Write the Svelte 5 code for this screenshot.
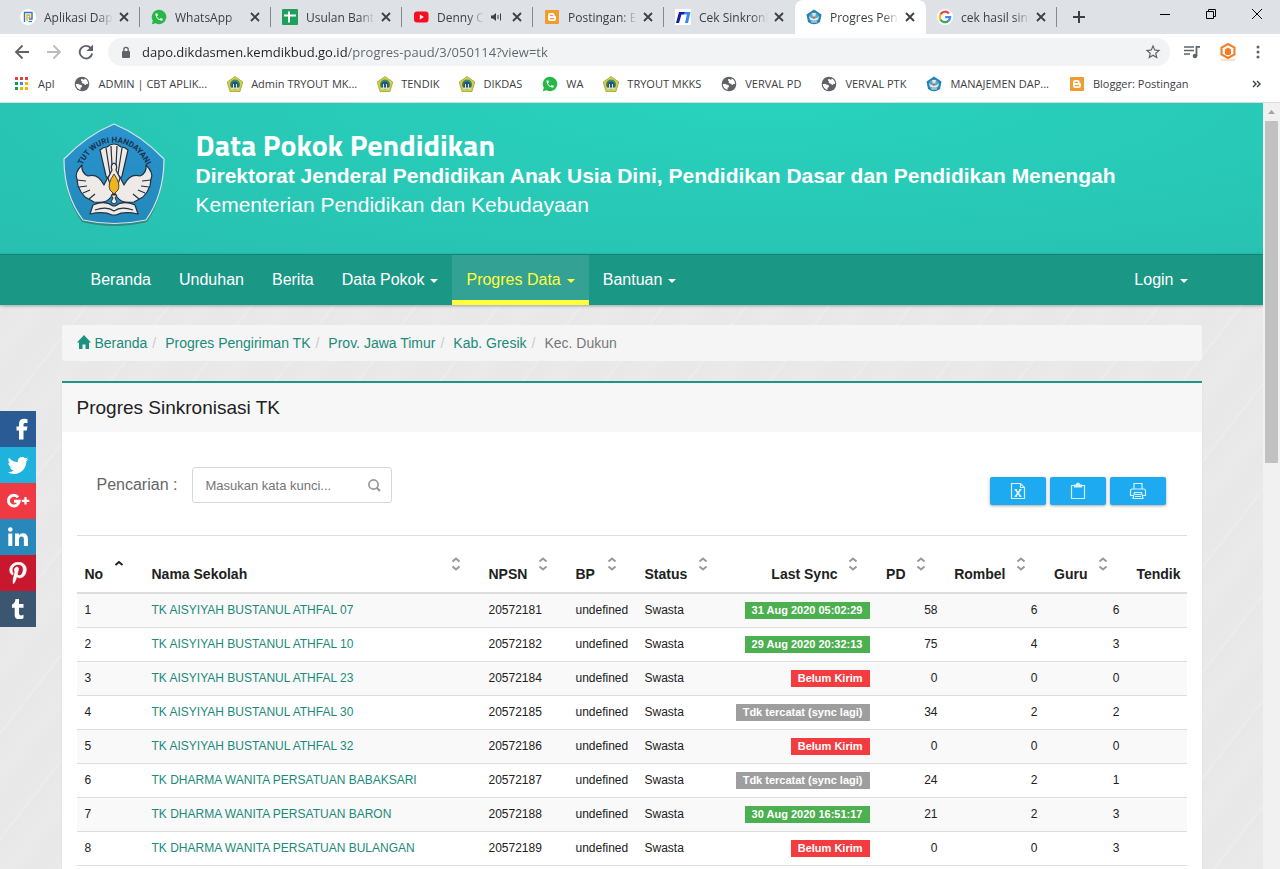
<script>
	const tabs = [
		{ icon: 'dapodik', title: 'Aplikasi Dapodik' },
		{ icon: 'whatsapp', title: 'WhatsApp' },
		{ icon: 'sheets', title: 'Usulan Bantuan' },
		{ icon: 'youtube', title: 'Denny Caknan', sound: true },
		{ icon: 'blogger', title: 'Postingan: Edit' },
		{ icon: 'sync', title: 'Cek Sinkronisasi' },
		{ icon: 'tutwuri', title: 'Progres Pengiriman', active: true },
		{ icon: 'google', title: 'cek hasil sinkron' }
	];

	const bookmarks = [
		{ icon: 'apps', title: 'Apl' },
		{ icon: 'globe', title: 'ADMIN | CBT APLIK...' },
		{ icon: 'jatim', title: 'Admin TRYOUT MK...' },
		{ icon: 'jatim', title: 'TENDIK' },
		{ icon: 'jatim', title: 'DIKDAS' },
		{ icon: 'whatsapp', title: 'WA' },
		{ icon: 'jatim', title: 'TRYOUT MKKS' },
		{ icon: 'globe', title: 'VERVAL PD' },
		{ icon: 'globe', title: 'VERVAL PTK' },
		{ icon: 'tutwuri', title: 'MANAJEMEN DAP...' },
		{ icon: 'blogger', title: 'Blogger: Postingan' }
	];

	const menu = [
		{ label: 'Beranda' },
		{ label: 'Unduhan' },
		{ label: 'Berita' },
		{ label: 'Data Pokok', dropdown: true },
		{ label: 'Progres Data', dropdown: true, active: true },
		{ label: 'Bantuan', dropdown: true }
	];

	const crumbs = ['Progres Pengiriman TK', 'Prov. Jawa Timur', 'Kab. Gresik'];

	const social = ['facebook', 'twitter', 'gplus', 'linkedin', 'pinterest', 'tumblr'];

	const columns = [
		{ label: 'No', cls: 'no', sorted: true },
		{ label: 'Nama Sekolah', cls: 'nama' },
		{ label: 'NPSN', cls: 'npsn' },
		{ label: 'BP', cls: 'bp' },
		{ label: 'Status', cls: 'status' },
		{ label: 'Last Sync', cls: 'sync', num: true },
		{ label: 'PD', cls: 'pd', num: true },
		{ label: 'Rombel', cls: 'rombel', num: true },
		{ label: 'Guru', cls: 'guru', num: true },
		{ label: 'Tendik', cls: 'tendik', num: true }
	];

	const belum = { text: 'Belum Kirim', type: 'danger' };
	const lagi = { text: 'Tdk tercatat (sync lagi)', type: 'default' };
	const ok = (text) => ({ text, type: 'success' });

	const schools = [
		{ nama: 'TK AISYIYAH BUSTANUL ATHFAL 07', npsn: '20572181', sync: ok('31 Aug 2020 05:02:29'), pd: 58, rombel: 6, guru: 6 },
		{ nama: 'TK AISYIYAH BUSTANUL ATHFAL 10', npsn: '20572182', sync: ok('29 Aug 2020 20:32:13'), pd: 75, rombel: 4, guru: 3 },
		{ nama: 'TK AISYIYAH BUSTANUL ATHFAL 23', npsn: '20572184', sync: belum, pd: 0, rombel: 0, guru: 0 },
		{ nama: 'TK AISYIYAH BUSTANUL ATHFAL 30', npsn: '20572185', sync: lagi, pd: 34, rombel: 2, guru: 2 },
		{ nama: 'TK AISYIYAH BUSTANUL ATHFAL 32', npsn: '20572186', sync: belum, pd: 0, rombel: 0, guru: 0 },
		{ nama: 'TK DHARMA WANITA PERSATUAN BABAKSARI', npsn: '20572187', sync: lagi, pd: 24, rombel: 2, guru: 1 },
		{ nama: 'TK DHARMA WANITA PERSATUAN BARON', npsn: '20572188', sync: ok('30 Aug 2020 16:51:17'), pd: 21, rombel: 2, guru: 3 },
		{ nama: 'TK DHARMA WANITA PERSATUAN BULANGAN', npsn: '20572189', sync: belum, pd: 0, rombel: 0, guru: 3 }
	];

	let url = $state('dapo.dikdasmen.kemdikbud.go.id/progres-paud/3/050114?view=tk');
	let keyword = $state('');

	let rows = $derived(schools.filter((s) => s.nama.toLowerCase().includes(keyword.toLowerCase())));
</script>

{#snippet favicon(name)}
	<svg class="favicon" viewBox="0 0 16 16" aria-hidden="true">
		{#if name === 'dapodik'}
			<circle cx="8" cy="8" r="8" fill="#fff" />
			<path d="M4.500 13V3.500h7.500v6.500H9" fill="none" stroke="#2b7bb9" stroke-width="1.400" />
			<path d="M7 12V6h2.800v2.800H8" fill="none" stroke="#e9a23b" stroke-width="1.300" />
			<path d="M8.500 12.500H12" stroke="#2b7bb9" stroke-width="1.200" />
		{:else if name === 'whatsapp'}
			<path d="M8 .8a7.200 7.200 0 0 0-6.200 10.900L.8 15.300l3.800-1A7.200 7.200 0 1 0 8 .8z" fill="#25b846" />
			<path
				transform="translate(3.200 3.200) scale(.4)"
				d="M6.620 10.790c1.440 2.830 3.760 5.140 6.590 6.590l2.200-2.200c.27-.27.67-.36 1.020-.24 1.120.37 2.330.57 3.570.57.55 0 1 .45 1 1V20c0 .55-.45 1-1 1-9.390 0-17-7.610-17-17 0-.55.45-1 1-1h3.500c.55 0 1 .45 1 1 0 1.250.2 2.450.57 3.570.11.35.03.74-.25 1.020l-2.200 2.200z"
				fill="#fff"
			/>
		{:else if name === 'sheets'}
			<rect width="16" height="16" rx="1" fill="#1fa05a" />
			<path d="M7 2.500v11M2 6.500h12" stroke="#fff" stroke-width="2" />
		{:else if name === 'youtube'}
			<rect x="1" y="2.500" width="14.500" height="11" rx="3" fill="#f60f1f" />
			<path d="M6.800 5.500v5l4-2.500z" fill="#fff" />
		{:else if name === 'blogger'}
			<rect x="1" y="1" width="14" height="14" rx="1" fill="#f29c2e" />
			<path
				d="M6.200 4h2.300a2.200 2.200 0 0 1 2.200 2v.6c0 .5.300.7.700.7s.6.300.6.700v1.800A2.200 2.200 0 0 1 9.800 12H6.200A2.200 2.200 0 0 1 4 9.800V6.200A2.200 2.200 0 0 1 6.200 4z"
				fill="#fff"
			/>
			<path d="M6.400 6.400h2M6.400 9.600h3.300" stroke="#f29c2e" stroke-width="1.200" stroke-linecap="round" />
		{:else if name === 'sync'}
			<rect width="16" height="16" fill="#fff" />
			<path d="M1 14 4 3h6l-.7 2.500H6.500L4 14z" fill="#16209c" />
			<path d="M10 3h5.500L13 14h-3l1.900-8.500H9.300z" fill="#2e8be8" />
		{:else if name === 'tutwuri'}
			<path d="M8 .5 15.500 5.500 14 13Q8 17.500 2 13L.5 5.500z" fill="#2383b4" />
			<circle cx="8" cy="8.500" r="5" fill="#5fa6c8" />
			<path d="M6 4h4l-1 4H7z" fill="#dfe9ec" />
			<path d="M3.500 7q1 3 4.500 2.500Q11.500 10 12.500 7q.5 4-3 4.500h-3Q3 11 3.500 7z" fill="#e8eef0" />
			<circle cx="8" cy="8.500" r="1.200" fill="#b5764f" />
			<path d="M5 13h6" stroke="#d5e3e8" />
		{:else if name === 'google'}
			<circle cx="8" cy="8" r="8" fill="#fff" />
			<g fill="none" stroke-width="2.200">
				<path d="M11.900 4.400A5.200 5.200 0 0 0 3.400 5.600" stroke="#ea4335" />
				<path d="M3.400 5.600a5.200 5.200 0 0 0 0 4.800" stroke="#fbbc05" />
				<path d="M3.400 10.400a5.200 5.200 0 0 0 8 1.500" stroke="#34a853" />
				<path d="M11.400 11.900A5 5 0 0 0 13.100 8.200H8.200" stroke="#4285f4" />
			</g>
		{:else if name === 'apps'}
			{#each ['#db4437', '#db4437', '#db4437', '#0f9d58', '#4285f4', '#f4b400', '#0f9d58', '#f4b400', '#f4b400'] as color, i}
				<rect x={1 + (i % 3) * 5} y={1 + Math.floor(i / 3) * 5} width="3" height="3" fill={color} />
			{/each}
		{:else if name === 'globe'}
			<circle cx="8" cy="8" r="7.300" fill="#5f6368" />
			<path
				d="M1.800 8q.2 4.500 4.700 6v-2.200q1.500-.3 1.500-1.600 0-1.400-1.500-1.500L5 8.500Q4.500 7.500 3.500 8zM7 3.200q-.5 1.500 1 2.300-1 1.500.8 2 1.800 0 2 1.400 1.200.3 1.400-.9l2-.3q-.3-3.800-3.700-5.200Q11 4 9.500 3.800 8.500 2.500 7 3.200z"
				fill="#fff"
			/>
		{:else if name === 'jatim'}
			<path d="M8 .5 15.800 6 13 15.500H3L.2 6z" fill="#d9cf3c" stroke="#8d9a3a" stroke-width=".7" />
			<circle cx="8" cy="8.500" r="5" fill="#3f8b5c" />
			<path d="M4.500 7.500q3.500-4 7 0V11h-7z" fill="#264f8f" />
			<path d="M6 8h1v4H6zM9 8h1v4H9z" fill="#e4e6c0" />
			<path d="M4 12.500h8" stroke="#d7dcc8" stroke-width="1.500" />
		{/if}
	</svg>
{/snippet}

{#snippet cross()}
	<svg viewBox="0 0 10 10" width="10" height="10" aria-hidden="true">
		<path d="M1 1l8 8M9 1L1 9" stroke="#3c4043" stroke-width="1.800" />
	</svg>
{/snippet}

<div class="browser">
	<div class="tabstrip">
		<div class="tabs">
			{#each tabs as tab}
				<div class="tab" class:active={tab.active}>
					{@render favicon(tab.icon)}
					<span class="tab-title">{tab.title}</span>
					{#if tab.sound}
						<svg class="sound" viewBox="0 0 12 10" aria-hidden="true">
							<path d="M1 3.500h2L6 1v8L3 6.500H1z" fill="#3c4043" />
							<path d="M8 3v4M10.500 1.500v7" stroke="#3c4043" />
						</svg>
					{/if}
					<button class="plain" aria-label="Tutup tab">{@render cross()}</button>
				</div>
			{/each}
			<button class="plain new-tab" aria-label="Tab baru">
				<svg viewBox="0 0 12 12" width="12" height="12">
					<path d="M6 0v12M0 6h12" stroke="#3c4043" stroke-width="2" />
				</svg>
			</button>
		</div>
		<div class="window-buttons">
			<button class="plain" aria-label="Perkecil">
				<svg viewBox="0 0 12 12" width="12" height="12"><path d="M1 6.500h10" stroke="#000" /></svg>
			</button>
			<button class="plain" aria-label="Pulihkan">
				<svg viewBox="0 0 12 12" width="12" height="12" fill="none" stroke="#000">
					<path d="M1.500 3.500h7v7h-7zM3.500 3.500v-2h7v7h-2" />
				</svg>
			</button>
			<button class="plain" aria-label="Tutup">
				<svg viewBox="0 0 12 12" width="12" height="12"><path d="M1 1l10 10M11 1L1 11" stroke="#000" /></svg>
			</button>
		</div>
	</div>

	<div class="toolbar">
		<button class="plain" aria-label="Kembali">
			<svg viewBox="0 0 16 16" width="16" height="16" fill="none" stroke="#5f6368" stroke-width="1.800">
				<path d="M15 8H2M8.500 1.500 2 8l6.500 6.500" />
			</svg>
		</button>
		<button class="plain" aria-label="Maju">
			<svg viewBox="0 0 16 16" width="16" height="16" fill="none" stroke="#babcbe" stroke-width="1.800">
				<path d="M1 8h13M7.500 1.500 14 8l-6.500 6.500" />
			</svg>
		</button>
		<button class="plain" aria-label="Muat ulang">
			<svg viewBox="0 0 16 16" width="16" height="16">
				<path d="M13.200 4.500A6.300 6.300 0 1 0 14.200 9.500" fill="none" stroke="#5f6368" stroke-width="1.900" />
				<path d="M15 .5v6.500H8.500z" fill="#5f6368" />
			</svg>
		</button>
		<div class="omnibox">
			<svg viewBox="0 0 10 13" width="10" height="13" aria-hidden="true">
				<rect x="1" y="5" width="8" height="7" rx="1" fill="#5f6368" />
				<path d="M2.800 5V3.500a2.200 2.200 0 0 1 4.400 0V5" fill="none" stroke="#5f6368" stroke-width="1.300" />
			</svg>
			<input class="url" aria-label="Alamat" bind:value={url} />
			<button class="plain" aria-label="Tandai halaman ini">
				<svg viewBox="0 0 24 24" width="18" height="18">
					<path
						d="m22 9.240-7.190-.62L12 2 9.190 8.630 2 9.240l5.460 4.730L5.820 21 12 17.270 18.180 21l-1.630-7.030L22 9.240zM12 15.400l-3.760 2.270 1-4.280-3.320-2.880 4.380-.38L12 6.100l1.710 4.040 4.380.38-3.320 2.880 1 4.280L12 15.400z"
						fill="#5f6368"
					/>
				</svg>
			</button>
		</div>
		<div class="actions">
			<button class="plain" aria-label="Kontrol media">
				<svg viewBox="0 0 16 14" width="16" height="14">
					<path d="M0 2h10M0 5.500h10M0 9h6" stroke="#5f6368" stroke-width="1.600" />
					<path d="M12.500 11V1.800H16" fill="none" stroke="#5f6368" stroke-width="1.800" />
					<circle cx="11" cy="11" r="2.300" fill="#5f6368" />
				</svg>
			</button>
			<button class="plain" aria-label="Ekstensi">
				<svg viewBox="0 0 16 18" width="16" height="18">
					<path d="M8 1l6.500 3.500v7L8 15l-6.500-3.500v-7z" fill="none" stroke="#f47b20" stroke-width="2" />
					<path d="M5 11V6.500l3-2 3 2V11l-1.500 1h-3z" fill="#f47b20" />
					<path d="M1 17h14" stroke="#f9c29b" />
				</svg>
			</button>
			<button class="plain" aria-label="Menu">
				<svg viewBox="0 0 4 14" width="4" height="14" fill="#5f6368">
					<circle cx="2" cy="2" r="1.500" /><circle cx="2" cy="7" r="1.500" /><circle cx="2" cy="12" r="1.500" />
				</svg>
			</button>
		</div>
	</div>

	<div class="bookmarks">
		{#each bookmarks as mark}
			<a href="/bookmark">{@render favicon(mark.icon)}<span>{mark.title}</span></a>
		{/each}
		<button class="plain more" aria-label="Bookmark lainnya">
			<svg viewBox="0 0 9 8" width="9" height="8">
				<path d="M1 1l3 3-3 3M5 1l3 3-3 3" fill="none" stroke="#3c4043" stroke-width="1.400" />
			</svg>
		</button>
	</div>

	<div class="viewport">
		<div class="page">
			<header>
				<div class="container brand">
					<svg class="logo" viewBox="0 0 102 104" aria-label="Tut Wuri Handayani">
						<defs>
							<linearGradient id="blue" x1="0" y1="0" x2="0" y2="1">
								<stop offset="0" stop-color="#2b94cf" />
								<stop offset="1" stop-color="#2389bb" />
							</linearGradient>
							<path id="arc" d="M17 48C30 10 72 10 86 48" />
						</defs>
						<path
							d="M51 2Q78 14 101 37Q101 73 84 98Q51 106 19 98Q1 73 1 37Q24 14 51 2z"
							transform="translate(0 1)"
							fill="#34655f"
							opacity=".6"
						/>
						<path
							d="M51 1Q78 12 101 36Q101 72 83 97Q51 104 20 97Q1 72 1 36Q24 12 51 1z"
							fill="url(#blue)"
							stroke="#d5e5e8"
							stroke-width="1.200"
						/>
						<text font-family="Roboto, sans-serif" font-weight="bold" font-size="8" fill="#16324d">
							<textPath href="#arc" startOffset="50%" text-anchor="middle">TUT WURI HANDAYANI</textPath>
						</text>
						<g fill="#eeeae8" stroke="#24303f" stroke-width="1.200" stroke-linejoin="round">
							<path d="M37 27q3-3 7-3 3-3 7-3t7 3q4 0 7 3l-6 26-5 8h-6l-5-8z" />
							<path d="M43 25l4 26M48 23l1 20M54 23l-1 20M59 25l-4 26" fill="none" />
							<path
								d="M19 42q-8 8-5 14l1 7 3 6 4 5 9 5q12 2 17-5l3-5 3 5q5 7 17 5l9-5 4-5 3-6 1-7q3-6-5-14 1 8-6 11-10-3-16 9l-4-8-6-6-6 6-4 8q-6-12-16-9-7-3-6-11z"
							/>
							<path d="M14 57l9 1M16 64l8-1M20 70l7-3M26 76l6-5M88 57l-9 1M86 64l-8-1M82 70l-7-3M76 76l-6-5" fill="none" />
							<path d="M51 40q4 2 2 7l4 8-6 18-6-18 4-8q-2-5 2-7z" />
							<path d="M30 82q12-5 20 1h2q8-6 20-1l3 9q-14-3-22 1h-4q-8-4-22-1z" />
							<path d="M32 87q12-4 19 1 7-5 19-1" fill="none" />
						</g>
						<path d="M51 51q7 10 4 16l-4 4-4-4q-3-6 4-16z" fill="#edb621" stroke="#5b4620" />
						<path d="M48 72h6l-2 3 2 4-3 2-3-2 2-4z" fill="#eeeae8" stroke="#24303f" />
					</svg>
					<div class="brand-text">
						<h1>Data Pokok Pendidikan</h1>
						<h2>Direktorat Jenderal Pendidikan Anak Usia Dini, Pendidikan Dasar dan Pendidikan Menengah</h2>
						<p>Kementerian Pendidikan dan Kebudayaan</p>
					</div>
				</div>
			</header>

			<nav>
				<div class="container menu">
					{#each menu as item}
						<a href="/menu" class:active={item.active}>
							{item.label}{#if item.dropdown}<span class="caret"></span>{/if}
						</a>
					{/each}
					<a href="/login" class="login">Login<span class="caret"></span></a>
				</div>
			</nav>

			<main class="container">
				<ol class="breadcrumb">
					<li>
						<a href="/">
							<svg viewBox="0 0 14 14" width="14" height="14" aria-hidden="true">
								<path d="M7 0 14 7.500h-2V14H8.500V9.500h-3V14H2V7.500H0z" fill="#1b9380" />
							</svg>
							Beranda
						</a>
					</li>
					{#each crumbs as crumb}
						<li><a href="/progres">{crumb}</a></li>
					{/each}
					<li>Kec. Dukun</li>
				</ol>

				<section class="panel">
					<h3>Progres Sinkronisasi TK</h3>
					<div class="panel-body">
						<div class="tools">
							<label for="cari">Pencarian :</label>
							<div class="search">
								<input id="cari" placeholder="Masukan kata kunci..." bind:value={keyword} />
								<svg viewBox="0 0 14 14" width="14" height="14" aria-hidden="true">
									<circle cx="6.500" cy="6.500" r="4.600" fill="none" stroke="#999" stroke-width="1.700" />
									<path d="M9.500 9.500 13 13" stroke="#999" stroke-width="2.200" />
								</svg>
							</div>
							<div class="exports">
								<button aria-label="Excel">
									<svg viewBox="0 0 16 18" width="16" height="18" fill="none" stroke="#d5f2ff" stroke-width="1.200">
										<path d="M1.500 1.500h9l4 4v11h-13zM10.500 1.500v4h4" />
										<path d="M5.500 7.500l5 7M10.500 7.500l-5 7" stroke-width="1.800" />
										<path d="M4.500 7.500h2.500M9 7.500h2.500M4.500 14.500H7M9 14.500h2.500" />
									</svg>
								</button>
								<button aria-label="Salin">
									<svg viewBox="0 0 16 18" width="16" height="18" fill="none" stroke="#d5f2ff" stroke-width="1.200">
										<path d="M4 3.500H1.500v13h13v-13H12" />
										<path d="M4.500 5V3h2q0-2 1.500-2t1.500 2h2v2z" fill="#d5f2ff" />
									</svg>
								</button>
								<button aria-label="Cetak">
									<svg viewBox="0 0 18 18" width="18" height="18" fill="none" stroke="#d5f2ff" stroke-width="1.200">
										<path d="M5 7V1.500h8V7M4.500 13.500h-3V9q0-2 2-2h11q2 0 2 2v4.500h-3" />
										<path d="M5.500 10.500h7l1.500 6H4zM6 12.500h6M6 14.500h6" />
									</svg>
								</button>
							</div>
						</div>

						<div class="table-wrap">
							<table>
								<thead>
									<tr>
										{#each columns as col}
											<th class={[col.cls, col.num && 'num']}>
												{col.label}
												<svg class="sort" viewBox="0 0 10 16" width="10" height="16" aria-hidden="true">
													{#if col.sorted}
														<path d="M1.500 9 5 6l3.500 3" fill="none" stroke="#222" stroke-width="2" />
													{:else}
														<path d="M1.500 5.500 5 2.500l3.500 3M1.500 10.500l3.500 3 3.500-3" fill="none" stroke="#999" stroke-width="2" />
													{/if}
												</svg>
											</th>
										{/each}
									</tr>
								</thead>
								<tbody>
									{#each rows as row, i}
										<tr>
											<td>{i + 1}</td>
											<td><a href="/sekolah/{row.npsn}">{row.nama}</a></td>
											<td>{row.npsn}</td>
											<td>undefined</td>
											<td>Swasta</td>
											<td class="num"><span class="badge {row.sync.type}">{row.sync.text}</span></td>
											<td class="num">{row.pd}</td>
											<td class="num">{row.rombel}</td>
											<td class="num">{row.guru}</td>
											<td></td>
										</tr>
									{/each}
								</tbody>
							</table>
						</div>
					</div>
				</section>
			</main>

			<div class="share">
				{#each social as name}
					<a href="/share/{name}" class={name} aria-label={name}>
						{#if name === 'facebook'}
							<svg viewBox="0 0 24 24" width="24" height="24">
								<path d="M17.500 13.500h3.200l.8-4h-4V7.800c0-1.300.5-1.900 2-1.900h2V2.200Q20 1.800 18.400 1.800c-3.500 0-5.400 1.800-5.400 5.200v2.500h-2.500v4H13V22.500h4.500z" />
							</svg>
						{:else if name === 'twitter'}
							<svg viewBox="0 0 24 24" width="24" height="24">
								<path
									d="M22.460 6c-.77.35-1.600.58-2.460.69.88-.53 1.560-1.370 1.880-2.380-.83.5-1.750.85-2.720 1.050C18.370 4.500 17.260 4 16 4c-2.350 0-4.270 1.920-4.270 4.290 0 .34.04.67.11.98C8.280 9.090 5.110 7.380 3 4.790c-.37.63-.58 1.370-.58 2.150 0 1.490.75 2.810 1.910 3.560-.71 0-1.370-.2-1.950-.5v.03c0 2.080 1.480 3.820 3.440 4.210a4.220 4.220 0 0 1-1.930.07 4.280 4.280 0 0 0 4 2.980 8.521 8.521 0 0 1-5.330 1.840c-.34 0-.68-.02-1.020-.06C3.440 20.290 5.700 21 8.120 21 16 21 20.330 14.460 20.330 8.790c0-.19 0-.37-.01-.56.84-.6 1.560-1.360 2.140-2.230z"
								/>
							</svg>
						{:else if name === 'gplus'}
							<svg viewBox="0 0 24 24" width="24" height="24" fill="none" stroke="#fff">
								<path d="M12 8.200A5.400 5.400 0 1 0 13.200 12.200H8" stroke-width="3" />
								<path d="M19.500 8v7.500M15.800 11.800h7.500" stroke-width="2.200" />
							</svg>
						{:else if name === 'linkedin'}
							<svg viewBox="0 0 24 24" width="24" height="24">
								<circle cx="4.300" cy="4.500" r="2.300" />
								<path d="M2.300 8.500h4V21h-4zM9 8.500h3.900v1.700q1.300-2 4-2 5 0 5 5.600V21h-4v-6.500q0-3-2.300-3-2.600 0-2.600 3V21H9z" />
							</svg>
						{:else if name === 'pinterest'}
							<svg viewBox="0 0 384 512" width="18" height="22" stroke="#fff" stroke-width="16">
								<path
									d="M204 6.500C101.400 6.500 0 74.900 0 185.600 0 256 39.600 296 63.600 296c9.900 0 15.600-27.600 15.600-35.400 0-9.300-23.700-29.100-23.700-67.800 0-80.400 61.200-137.400 140.400-137.400 68.100 0 118.500 38.700 118.500 109.800 0 53.100-21.300 152.700-90.300 152.700-24.900 0-46.200-18-46.200-43.800 0-37.800 26.400-74.400 26.400-113.400 0-66.200-93.900-54.200-93.900 25.800 0 16.800 2.100 35.400 9.600 50.700-13.800 59.400-42 147.900-42 209.100 0 18.900 2.700 37.500 4.500 56.400 3.400 3.800 1.700 3.400 6.900 1.500 50.400-69 48.600-82.500 71.400-172.800 12.300 23.400 44.100 36 69.300 36 106.200 0 153.900-103.500 153.900-196.800C384 71.300 298.200 6.500 204 6.500z"
								/>
							</svg>
						{:else}
							<svg viewBox="0 0 14 20" width="14" height="20">
								<path d="M4.500 0H8v5h4.500v3.700H8v5.500q0 2.300 2 2.300 1.200 0 2.500-.8v3.600q-2 .9-4.500.9-4.300 0-4.300-4.200V8.700H1V5.500Q4.200 4.300 4.500 0z" />
							</svg>
						{/if}
					</a>
				{/each}
			</div>
		</div>
		<div class="scrollbar">
			<svg viewBox="0 0 7 4" width="7" height="4" aria-hidden="true"><path d="M0 4 3.500 0 7 4z" fill="#a3a3a3" /></svg>
			<div class="thumb"></div>
		</div>
	</div>
</div>

<style>
	:global(body) {
		margin: 0;
	}

	.browser {
		height: 100vh;
		display: flex;
		flex-direction: column;
		overflow: hidden;
		font-family: 'Open Sans', 'Noto Sans', sans-serif;
		font-size: 12px;
		color: #3c4043;
		background: #fff;
	}

	.plain {
		display: flex;
		align-items: center;
		padding: 0;
		border: 0;
		background: none;
	}

	.favicon {
		width: 16px;
		height: 16px;
		flex: none;
	}

	/* Tabs */
	.tabstrip {
		display: flex;
		height: 34px;
		background: #dee1e6;
	}

	.tabs {
		flex: 1;
		display: flex;
		align-items: center;
		min-width: 0;
		padding-left: 9px;
	}

	.tab {
		flex: 0 1 131px;
		box-sizing: border-box;
		display: flex;
		align-items: center;
		min-width: 0;
		height: 20px;
		padding: 0 10px 0 11px;
		border-right: 1px solid #85888d;
	}

	.tab.active {
		height: 34px;
		border-right-color: transparent;
		border-radius: 8px 8px 0 0;
		background: #fff;
	}

	.tab:has(+ .active) {
		border-right-color: transparent;
	}

	.tab-title {
		flex: 1;
		min-width: 0;
		margin: 0 6px 0 8px;
		overflow: hidden;
		white-space: nowrap;
		-webkit-mask-image: linear-gradient(to left, transparent, #000 16px);
		mask-image: linear-gradient(to left, transparent, #000 16px);
	}

	.sound {
		width: 12px;
		height: 10px;
		flex: none;
		margin-right: 10px;
	}

	.new-tab {
		margin-left: 16px;
	}

	.window-buttons {
		display: flex;
		align-items: center;
		gap: 34px;
		padding: 0 17px 6px 0;
	}

	/* Toolbar */
	.toolbar {
		box-sizing: border-box;
		display: flex;
		align-items: center;
		gap: 16px;
		height: 34px;
		padding: 2px 20px 0 14px;
	}

	.omnibox {
		flex: 1;
		display: flex;
		align-items: center;
		height: 28px;
		margin: 0 -2px;
		padding: 0 8px 0 13px;
		border-radius: 14px;
		background: #f1f3f4;
	}

	.url {
		flex: 1;
		min-width: 0;
		margin-left: 11px;
		padding: 0;
		border: 0;
		outline: none;
		font: 13px 'Open Sans', 'Noto Sans', sans-serif;
		color: transparent;
		background: linear-gradient(to right, #202124 206px, #5f6368 206px);
		-webkit-background-clip: text;
		background-clip: text;
	}

	.actions {
		display: flex;
		align-items: center;
		gap: 20px;
	}

	.bookmarks {
		box-sizing: border-box;
		display: flex;
		align-items: center;
		gap: 20px;
		height: 35px;
		padding: 0 19px 3px 14px;
		border-bottom: 1px solid #dadce0;
		font-size: 11px;
	}

	.bookmarks a {
		display: flex;
		align-items: center;
		gap: 8px;
		color: #3c4043;
		text-decoration: none;
		white-space: nowrap;
	}

	.more {
		margin-left: auto;
	}

	/* Page */
	.viewport {
		flex: 1;
		display: flex;
		min-height: 0;
	}

	.page {
		flex: 1;
		min-width: 0;
		position: relative;
		overflow: hidden;
		font-family: 'Liberation Sans', Arial, sans-serif;
		background: repeating-linear-gradient(
			128deg,
			#e8e8e8 0,
			#eaeaea 24px,
			#e8e8e8 40px,
			#e9e9e9 62px,
			#ededed 63px,
			#e8e8e8 65px
		);
	}

	.container {
		box-sizing: border-box;
		width: 100%;
		max-width: 1140px;
		margin: 0 auto;
	}

	header {
		color: #fff;
		background: radial-gradient(ellipse at 60% 0, #28d3bd, #28bfaf 100%);
	}

	.brand {
		display: flex;
		align-items: center;
		gap: 31px;
		height: 151px;
		padding: 0 0 7px 1px;
	}

	.logo {
		width: 102px;
		height: 104px;
		flex: none;
	}

	.brand-text {
		padding-bottom: 2px;
	}

	.brand-text h1 {
		margin: 0;
		font: bold 30px/32px 'Titillium Web', 'Open Sans', sans-serif;
	}

	.brand-text h2,
	.brand-text p {
		margin: 0;
		font-size: 21px;
		line-height: 29px;
	}

	nav {
		position: relative;
		background: #1b9786;
		border-top: 1px solid #138272;
		box-shadow: 0 1px 3px rgba(0, 0, 0, 0.3);
	}

	.menu {
		display: flex;
		padding: 0 0 0 15px;
	}

	.menu a {
		padding: 15px 14px 10px;
		border-bottom: 5px solid transparent;
		font-size: 16px;
		line-height: 20px;
		color: #fff;
		text-decoration: none;
		white-space: nowrap;
	}

	.menu a.active {
		color: #ffff3b;
		background: #33a193;
		border-color: #ffff3b;
	}

	.menu a.login {
		margin-left: auto;
	}

	.caret {
		display: inline-block;
		margin-left: 6px;
		vertical-align: middle;
		border: 4px solid transparent;
		border-top-color: currentColor;
		border-bottom: 0;
	}

	.breadcrumb {
		display: flex;
		margin: 20px 0;
		padding: 8px 15px;
		border-radius: 3px;
		list-style: none;
		font-size: 14px;
		line-height: 20px;
		color: #777;
		background: #f5f5f5;
	}

	.breadcrumb a {
		color: #1b8a79;
		text-decoration: none;
	}

	.breadcrumb svg {
		vertical-align: -1px;
	}

	.breadcrumb li + li::before {
		content: '/';
		padding: 0 9px 0 5px;
		color: #ccc;
	}

	.panel {
		border-top: 2px solid #1b9786;
		background: #fff;
		box-shadow: 0 1px 1px rgba(0, 0, 0, 0.1);
	}

	.panel h3 {
		margin: 0;
		padding: 12px 15px;
		font-size: 19px;
		font-weight: normal;
		line-height: 25px;
		color: #222;
		background: #f7f7f7;
	}

	.panel-body {
		padding: 33px 15px 20px;
	}

	.tools {
		display: flex;
		align-items: center;
		padding: 0 21px 30px 20px;
	}

	.tools label {
		margin-right: 15px;
		font-size: 16px;
		color: #666;
	}

	.search {
		box-sizing: border-box;
		display: flex;
		align-items: center;
		width: 200px;
		height: 36px;
		padding: 0 10px 0 12px;
		border: 1px solid #d8d8d8;
		border-radius: 3px;
	}

	.search input {
		flex: 1;
		min-width: 0;
		padding: 0;
		border: 0;
		outline: none;
		font: 13px 'Liberation Sans', Arial, sans-serif;
		color: #333;
	}

	.search input::placeholder {
		color: #757575;
	}

	.exports {
		display: flex;
		gap: 4px;
		margin-left: auto;
		padding-top: 12px;
	}

	.exports button {
		display: flex;
		align-items: center;
		justify-content: center;
		width: 56px;
		height: 28px;
		padding: 0;
		border: 0;
		border-radius: 2px;
		background: #1eaaf1;
		box-shadow: 0 1px 3px rgba(0, 0, 0, 0.35);
	}

	.table-wrap {
		overflow: hidden;
		border-top: 1px solid #ddd;
	}

	table {
		width: calc(100% + 34px);
		table-layout: fixed;
		border-collapse: separate;
		border-spacing: 0;
		font-size: 12px;
		color: #212121;
	}

	th {
		position: relative;
		box-sizing: border-box;
		height: 58px;
		padding: 28px 8px 8px;
		border-bottom: 2px solid #ddd;
		font-size: 14px;
		line-height: 20px;
		text-align: left;
		white-space: nowrap;
	}

	th.num {
		padding-right: 40px;
	}

	.sort {
		position: absolute;
		top: 20px;
		right: 20px;
	}

	.no {
		width: 67px;
	}
	.npsn {
		width: 87px;
	}
	.bp {
		width: 69px;
	}
	.status {
		width: 91px;
	}
	.sync {
		width: 150px;
	}
	.pd {
		width: 68px;
	}
	.rombel {
		width: 100px;
	}
	.guru {
		width: 82px;
	}
	.tendik {
		width: 93px;
	}

	td {
		padding: 8px;
		border-bottom: 1px solid #ddd;
		line-height: 17px;
		white-space: nowrap;
	}

	tbody tr:nth-child(odd) {
		background: #f9f9f9;
	}

	td a {
		color: #1b8a79;
		text-decoration: none;
	}

	.num {
		text-align: right;
	}

	.badge {
		display: block;
		width: fit-content;
		margin-left: auto;
		padding: 0 7px;
		font-size: 11px;
		font-weight: bold;
		color: #fff;
	}

	.success {
		background: #4caf50;
	}
	.danger {
		background: #f23c40;
	}
	.default {
		background: #9e9e9e;
	}

	/* Share buttons floating over the left edge */
	.share {
		position: absolute;
		top: 308px;
		left: 0;
	}

	.share a {
		display: flex;
		align-items: center;
		justify-content: center;
		width: 36px;
		height: 36px;
		fill: #fff;
	}

	.facebook {
		background: #2a5b95;
	}
	.twitter {
		background: #1fb2dc;
	}
	.gplus {
		background: #ef3a43;
	}
	.linkedin {
		background: #2887bb;
	}
	.pinterest {
		background: #c8182d;
	}
	.tumblr {
		background: #3a5670;
	}

	.scrollbar {
		display: flex;
		flex-direction: column;
		align-items: center;
		gap: 7px;
		width: 17px;
		padding-top: 7px;
		background: #f1f1f1;
	}

	.thumb {
		width: 13px;
		height: 45%;
		background: #c1c1c1;
	}
</style>
